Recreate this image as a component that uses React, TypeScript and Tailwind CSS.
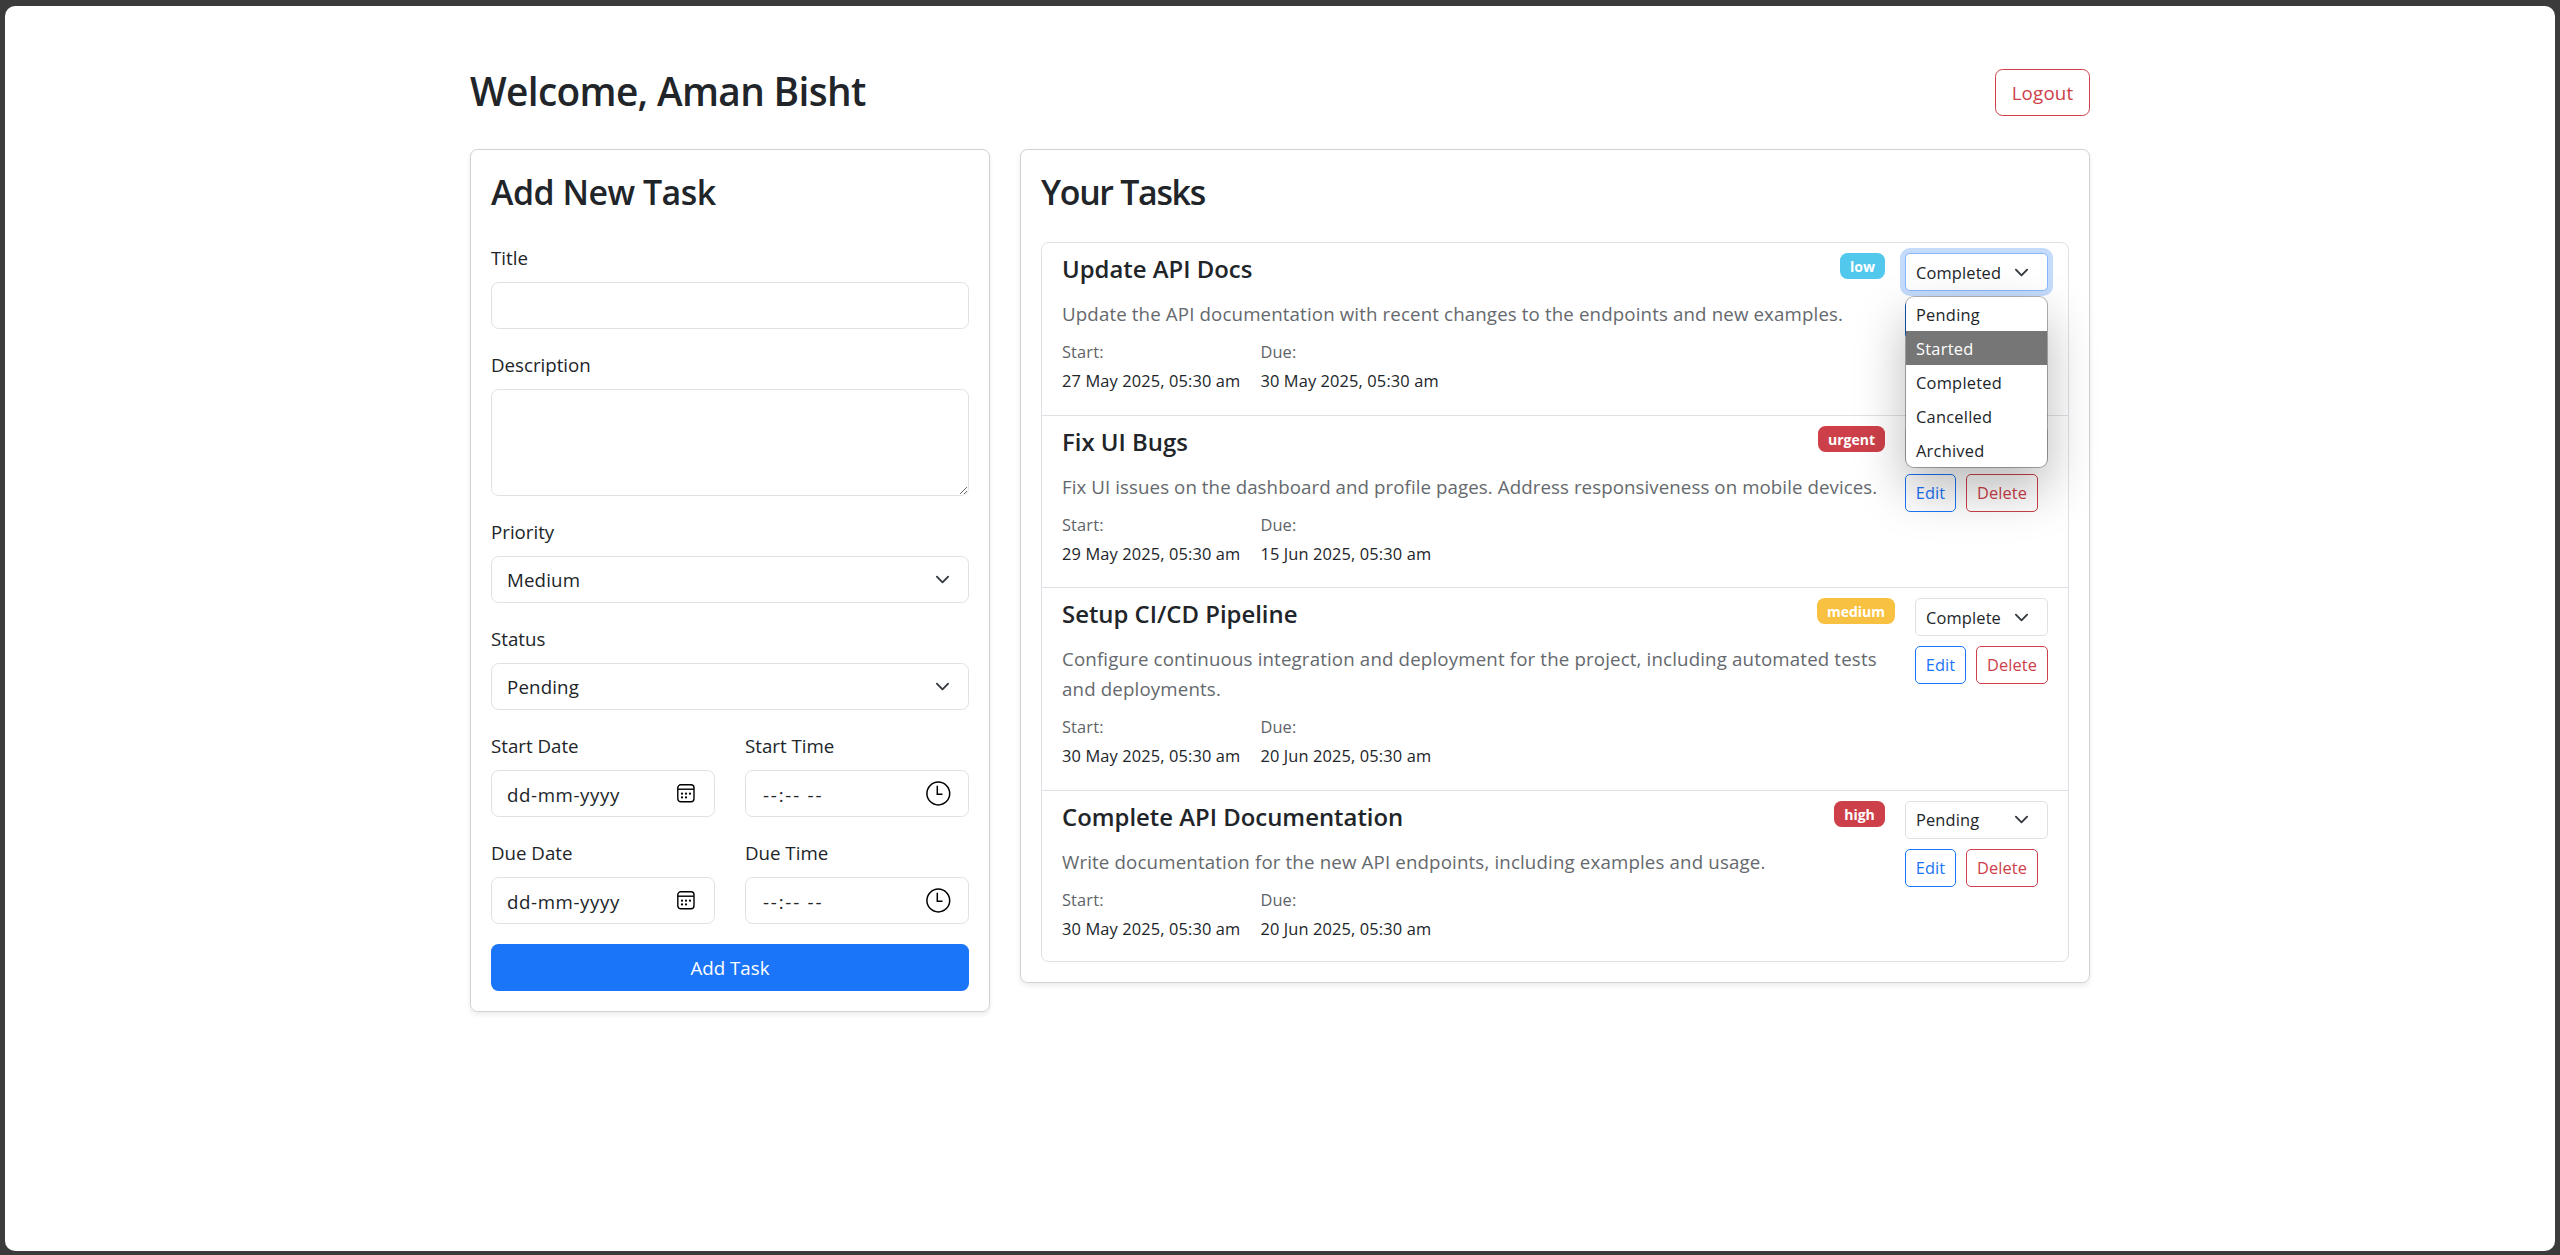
import React from "react";

const inputBox = "flex h-[47px] w-full items-center rounded-[7.5px] border border-[#dee2e6] bg-white px-[15px] text-[18.7px] text-[#212529]";
const smallBtn = "h-[38px] rounded-[5px] border bg-transparent pt-px text-[16.4px] tracking-[0.1px]";

function Chevron({ className = "" }: { className?: string }) {
  return (
    <svg viewBox="0 0 16 16" className={`size-[15px] shrink-0 ${className}`} fill="none" stroke="#343a40" strokeWidth="2" strokeLinecap="round" strokeLinejoin="round">
      <path d="m2 5 6 6 6-6" />
    </svg>
  );
}

function CalendarIcon() {
  return (
    <svg viewBox="0 0 18 19" className="h-[19px] w-[18px]" fill="none" stroke="#000" strokeWidth="1.4">
      <rect x="0.8" y="0.8" width="16.2" height="17" rx="3" />
      <path d="M1 5.2h16" />
      <g fill="#000" stroke="none">
        <circle cx="5" cy="9.7" r="1.1" />
        <circle cx="9" cy="9.7" r="1.1" />
        <circle cx="13" cy="9.7" r="1.1" />
        <circle cx="5" cy="13.4" r="1.1" />
        <circle cx="9" cy="13.4" r="1.1" />
      </g>
    </svg>
  );
}

function ClockIcon() {
  return (
    <svg viewBox="0 0 25 25" className="size-[25px]" fill="none" stroke="#000" strokeWidth="1.5">
      <circle cx="12.3" cy="12.5" r="11.4" />
      <path d="M11.3 4.8v8.4h5.2" />
    </svg>
  );
}

function Label({ children }: { children: React.ReactNode }) {
  return <div className="mb-[10px] h-[30px] text-[18.7px] leading-[32px]">{children}</div>;
}

function SelectField({ label, value }: { label: string; value: string }) {
  return (
    <div>
      <Label>{label}</Label>
      <div className={`${inputBox} justify-between`}>
        <span className="pt-[2px] tracking-[0.15px]">{value}</span>
        <Chevron className="mr-[3px]" />
      </div>
    </div>
  );
}

function DateField({ label }: { label: string }) {
  return (
    <div className="flex-1">
      <Label>{label}</Label>
      <div className={`${inputBox} justify-between`}>
        <span className="pt-[3px] tracking-[0.6px]">dd-mm-yyyy</span>
        <span className="mr-[4px]"><CalendarIcon /></span>
      </div>
    </div>
  );
}

function TimeField({ label }: { label: string }) {
  return (
    <div className="flex-1">
      <Label>{label}</Label>
      <div className={`${inputBox} justify-between`}>
        <span className="pt-[3px] pl-[2px] tracking-[1.8px] whitespace-pre">--:-- --</span>
        <span className="mr-[2px]"><ClockIcon /></span>
      </div>
    </div>
  );
}

function StatusMenu() {
  const options = ["Pending", "Started", "Completed", "Cancelled", "Archived"];
  return (
    <div className="absolute top-[43px] left-0 z-10 w-full overflow-hidden rounded-[9px] border border-black/30 bg-white bg-clip-padding shadow-[0_22px_50px_rgba(0,0,0,0.27)]">
      {options.map((o) => (
        <div key={o} className={`h-[34px] pl-[10px] text-[16.4px] leading-[36px] tracking-[0.25px] ${o === "Started" ? "bg-[#767676] text-white" : "text-[#212529]"}`}>
          {o}
        </div>
      ))}
    </div>
  );
}

type Task = {
  title: string;
  desc: string;
  start: string;
  due: string;
  priority: string;
  badge: string;
  status: string;
  item: string;
  controls: string;
  open?: boolean;
};

const tasks: Task[] = [
  { title: "Update API Docs", desc: "Update the API documentation with recent changes to the endpoints and new examples.", start: "27 May 2025, 05:30 am", due: "30 May 2025, 05:30 am", priority: "low", badge: "w-[45px] bg-[#51c8ec]", status: "Completed", item: "h-[171.5px] tracking-[0.135px]", controls: "w-[143px]", open: true },
  { title: "Fix UI Bugs", desc: "Fix UI issues on the dashboard and profile pages. Address responsiveness on mobile devices.", start: "29 May 2025, 05:30 am", due: "15 Jun 2025, 05:30 am", priority: "urgent", badge: "w-[67px] bg-[#cd4049]", status: "", item: "h-[172.5px] border-t tracking-[0.08px]", controls: "w-[143px]" },
  { title: "Setup CI/CD Pipeline", desc: "Configure continuous integration and deployment for the project, including automated tests and deployments.", start: "30 May 2025, 05:30 am", due: "20 Jun 2025, 05:30 am", priority: "medium", badge: "w-[78px] bg-[#f9c141]", status: "Complete", item: "h-[202.5px] border-t tracking-[0.15px]", controls: "w-[133px]" },
  { title: "Complete API Documentation", desc: "Write documentation for the new API endpoints, including examples and usage.", start: "30 May 2025, 05:30 am", due: "20 Jun 2025, 05:30 am", priority: "high", badge: "w-[51px] bg-[#cd4049]", status: "Pending", item: "h-[171.5px] border-t tracking-[0.15px]", controls: "w-[143px]" },
];

function DateBlock({ label, value }: { label: string; value: string }) {
  return (
    <div className="text-[16.4px] leading-[29px] tracking-[0.13px]">
      <div className="text-[#5e6368]">{label}</div>
      <div>{value}</div>
    </div>
  );
}

function TaskRow({ task }: { task: Task }) {
  return (
    <li className={`flex gap-[20px] border-[#dee2e6] px-[20px] pt-[10px] ${task.item}`}>
      <div className="min-w-0 flex-1">
        <div className="flex h-[30px] items-start justify-between">
          <h5 className="text-[23.9px] leading-[32px] font-semibold tracking-normal">{task.title}</h5>
          <span className={`h-[26px] shrink-0 rounded-[7.5px] text-center text-[14px] leading-[27px] font-bold tracking-normal text-white ${task.badge}`}>{task.priority}</span>
        </div>
        <p className="mt-[16px] text-[18.7px] leading-[30px] text-[#65696d]">{task.desc}</p>
        <div className="mt-[8px] flex gap-[20px]">
          <DateBlock label="Start:" value={task.start} />
          <DateBlock label="Due:" value={task.due} />
        </div>
      </div>
      <div className={`relative shrink-0 ${task.controls}`}>
        <div className={`flex h-[38px] items-center justify-between rounded-[5px] border bg-white pr-[18px] pl-[10px] text-[16.4px] tracking-[0.15px] ${task.open ? "border-[#86b7fe] shadow-[0_0_0_5px_#c4dbfc]" : "border-[#dee2e6]"}`}>
          <span className="pt-[2px]">{task.status}</span>
          <Chevron />
        </div>
        <div className="mt-[10px] flex gap-[10px]">
          {task.open ? (
            <>
              <div className={`${smallBtn} w-[51px] border-[#1b75f8]`} />
              <div className={`${smallBtn} w-[72px] border-[#cd4049]`} />
            </>
          ) : (
            <>
              <button className={`${smallBtn} w-[51px] border-[#1b75f8] text-[#1b75f8]`}>Edit</button>
              <button className={`${smallBtn} w-[72px] border-[#cd4049] text-[#cd4049]`}>Delete</button>
            </>
          )}
        </div>
        {task.open && <StatusMenu />}
      </div>
    </li>
  );
}

export default function App() {
  return (
    <div className="h-[1255px] w-[2560px] bg-[#3b3b3b] pt-[6px] pr-[5px] pb-[4px] pl-[5px] font-['Open_Sans',sans-serif] text-[#212529]">
      <div className="h-full rounded-[10px] bg-white pt-[62px]">
        <div className="mx-auto w-[1620px]">
          <header className="mb-[32px] flex h-[49px] items-center justify-between">
            <h2 className="pb-[3px] text-[38.8px] leading-[46px] font-semibold tracking-[-0.65px]">Welcome, Aman Bisht</h2>
            <button className="h-[47px] w-[95px] rounded-[7.5px] border border-[#cd4049] pt-[2px] text-[18.7px] tracking-[0.2px] text-[#cd4049]">Logout</button>
          </header>
          <main className="flex items-start gap-[30px]">
            <section className="w-[520px] rounded-[7.5px] border border-[#d0d1d2] p-[20px] shadow-[0_2.5px_5px_rgba(0,0,0,0.075)]">
              <h3 className="mb-[30px] h-[42px] text-[33.9px] leading-[44px] font-semibold tracking-[-0.5px]">Add New Task</h3>
              <div className="flex flex-col gap-[20px]">
                <div>
                  <Label>Title</Label>
                  <input className={inputBox} />
                </div>
                <div>
                  <Label>Description</Label>
                  <textarea className="block h-[107px] w-full rounded-[7.5px] border border-[#dee2e6]" />
                </div>
                <SelectField label="Priority" value="Medium" />
                <SelectField label="Status" value="Pending" />
                <div className="flex gap-[30px]">
                  <DateField label="Start Date" />
                  <TimeField label="Start Time" />
                </div>
                <div className="flex gap-[30px]">
                  <DateField label="Due Date" />
                  <TimeField label="Due Time" />
                </div>
                <button className="h-[47px] rounded-[7.5px] bg-[#1a75f8] pt-[2px] text-[18.7px] text-white">Add Task</button>
              </div>
            </section>
            <section className="w-[1070px] rounded-[7.5px] border border-[#d0d1d2] p-[20px] shadow-[0_2.5px_5px_rgba(0,0,0,0.075)]">
              <h3 className="mb-[30px] h-[42px] text-[33.9px] leading-[44px] font-semibold tracking-[-1.3px]">Your Tasks</h3>
              <ul className="rounded-[7.5px] border border-[#dee2e6]">
                {tasks.map((t) => (
                  <TaskRow key={t.title} task={t} />
                ))}
              </ul>
            </section>
          </main>
        </div>
      </div>
    </div>
  );
}
